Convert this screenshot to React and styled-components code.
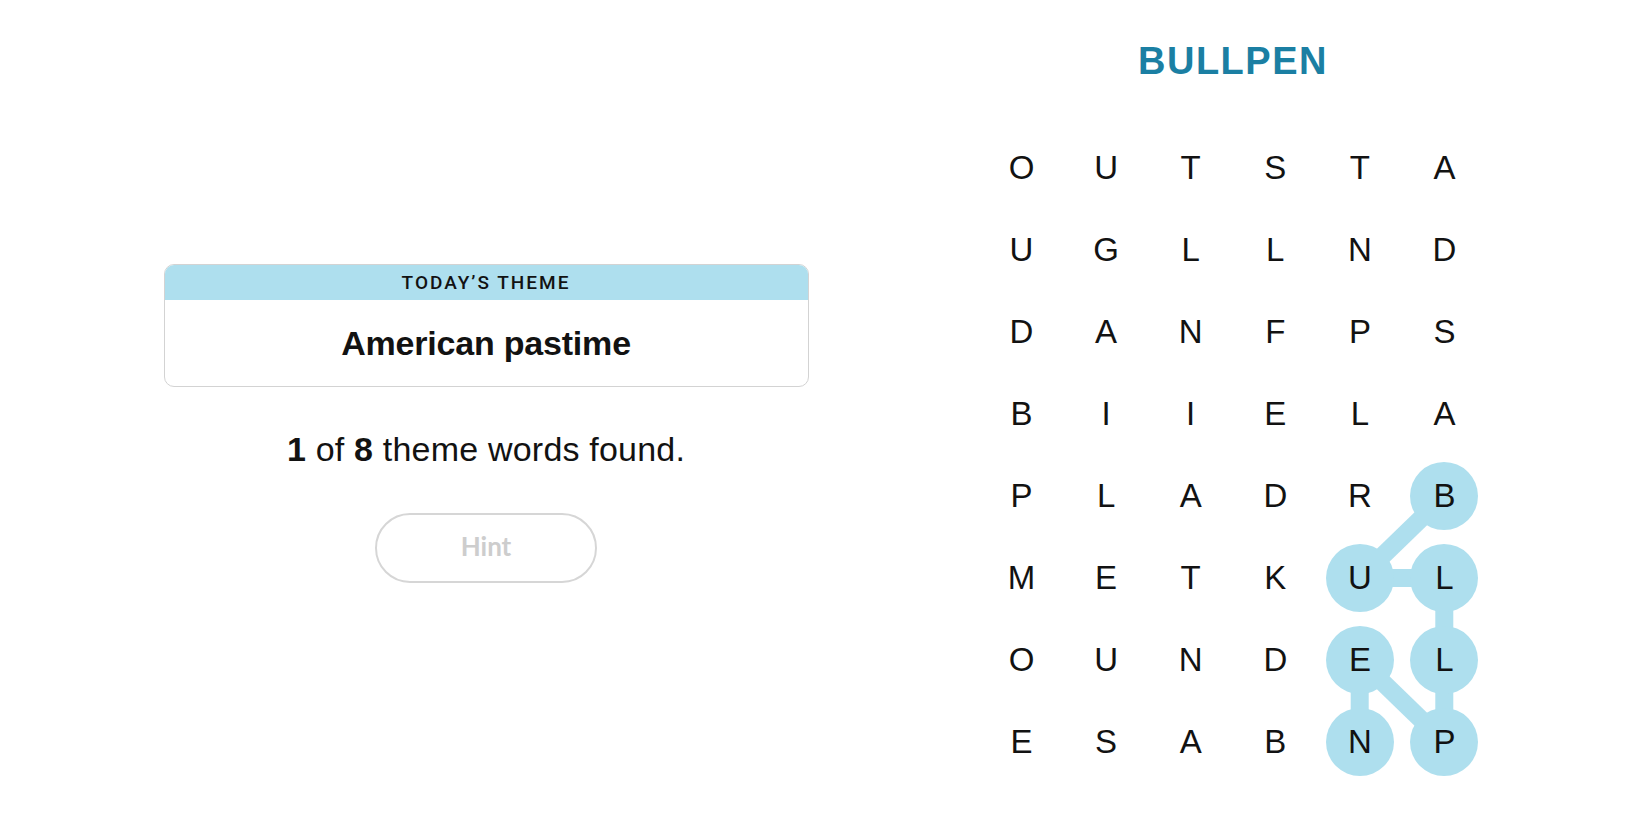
import React from 'react';
import styled, { createGlobalStyle } from 'styled-components';

const GlobalStyle = createGlobalStyle`
  body {
    margin: 0;
    background: #fff;
    font-family: "Liberation Sans", Arial, sans-serif;
    color: #121212;
  }
`;

const Page = styled.div`
  display: flex;
  width: 1650px;
  height: 825px;
  overflow: hidden;
`;

const LeftPanel = styled.div`
  width: 972px;
  display: flex;
  flex-direction: column;
  align-items: center;
  padding-top: 264px;
  box-sizing: border-box;
`;

const ThemeCard = styled.div`
  width: 645px;
  border: 1px solid #d3d3d3;
  border-radius: 10px;
  overflow: hidden;
  box-sizing: border-box;
`;

const ThemeHeader = styled.div`
  height: 35px;
  background: #aedfee;
  display: flex;
  align-items: center;
  justify-content: center;
  font-family: Roboto, "Liberation Sans", sans-serif;
  font-weight: 500;
  font-size: 19px;
  letter-spacing: 2px;
  color: #121212;
`;

const ThemeBody = styled.div`
  height: 86px;
  display: flex;
  align-items: center;
  justify-content: center;
  font-size: 34px;
  font-weight: 700;
  letter-spacing: -0.2px;
`;

const FoundText = styled.p`
  margin: 42px 0 0;
  font-size: 34px;
  line-height: 40px;
  letter-spacing: 0.2px;

  b {
    font-weight: 700;
  }
`;

const HintButton = styled.button`
  margin-top: 44px;
  width: 222px;
  height: 70px;
  padding: 0 0 4px;
  border: 2px solid #d6d6d6;
  border-radius: 35px;
  background: #fff;
  color: #cdcdcd;
  font-family: Lato, "Liberation Sans", sans-serif;
  font-weight: 700;
  font-size: 26px;
  cursor: default;
`;

const RightPanel = styled.div`
  width: 522px;
  display: flex;
  flex-direction: column;
  align-items: center;
  padding-top: 39px;
  box-sizing: border-box;
`;

const Title = styled.h1`
  margin: 0;
  font-size: 38px;
  line-height: 44px;
  font-weight: 700;
  letter-spacing: 1.5px;
  color: #1b7fa3;
`;

const CELL_W = 84.6;
const CELL_H = 82;

const Board = styled.div`
  position: relative;
  margin-top: 44px;
  display: grid;
  grid-template-columns: repeat(6, ${CELL_W}px);
  grid-template-rows: repeat(8, ${CELL_H}px);
`;

const Links = styled.svg`
  position: absolute;
  left: 0;
  top: 0;
  pointer-events: none;
`;

const Cell = styled.div`
  position: relative;
  z-index: 1;
  display: flex;
  align-items: center;
  justify-content: center;
`;

const Letter = styled.span`
  width: 68px;
  height: 68px;
  border-radius: 50%;
  display: flex;
  align-items: center;
  justify-content: center;
  font-size: 33px;
  color: #121212;
  background: ${(p) => (p.$found ? '#aedfee' : 'transparent')};
`;

const rows = [
  'OUTSTA',
  'UGLLND',
  'DANFPS',
  'BIIELA',
  'PLADRB',
  'METKUL',
  'OUNDEL',
  'ESABNP',
];

// path of BULLPEN as [row, col]
const word = [
  [4, 5],
  [5, 4],
  [5, 5],
  [6, 5],
  [7, 5],
  [6, 4],
  [7, 4],
];

const isFound = (r, c) => word.some(([wr, wc]) => wr === r && wc === c);
const cx = (c) => c * CELL_W + CELL_W / 2;
const cy = (r) => r * CELL_H + CELL_H / 2;

export default function App() {
  return (
    <Page>
      <GlobalStyle />
      <LeftPanel>
        <ThemeCard>
          <ThemeHeader>TODAY’S THEME</ThemeHeader>
          <ThemeBody>American pastime</ThemeBody>
        </ThemeCard>
        <FoundText>
          <b>1</b> of <b>8</b> theme words found.
        </FoundText>
        <HintButton>Hint</HintButton>
      </LeftPanel>
      <RightPanel>
        <Title>BULLPEN</Title>
        <Board>
          <Links width={CELL_W * 6} height={CELL_H * 8}>
            {word.slice(1).map(([r, c], i) => {
              const [pr, pc] = word[i];
              return (
                <line
                  key={i}
                  x1={cx(pc)}
                  y1={cy(pr)}
                  x2={cx(c)}
                  y2={cy(r)}
                  stroke="#aedfee"
                  strokeWidth="18"
                />
              );
            })}
          </Links>
          {rows.map((row, r) =>
            row.split('').map((ch, c) => (
              <Cell key={`${r}-${c}`}>
                <Letter $found={isFound(r, c)}>{ch}</Letter>
              </Cell>
            ))
          )}
        </Board>
      </RightPanel>
    </Page>
  );
}
